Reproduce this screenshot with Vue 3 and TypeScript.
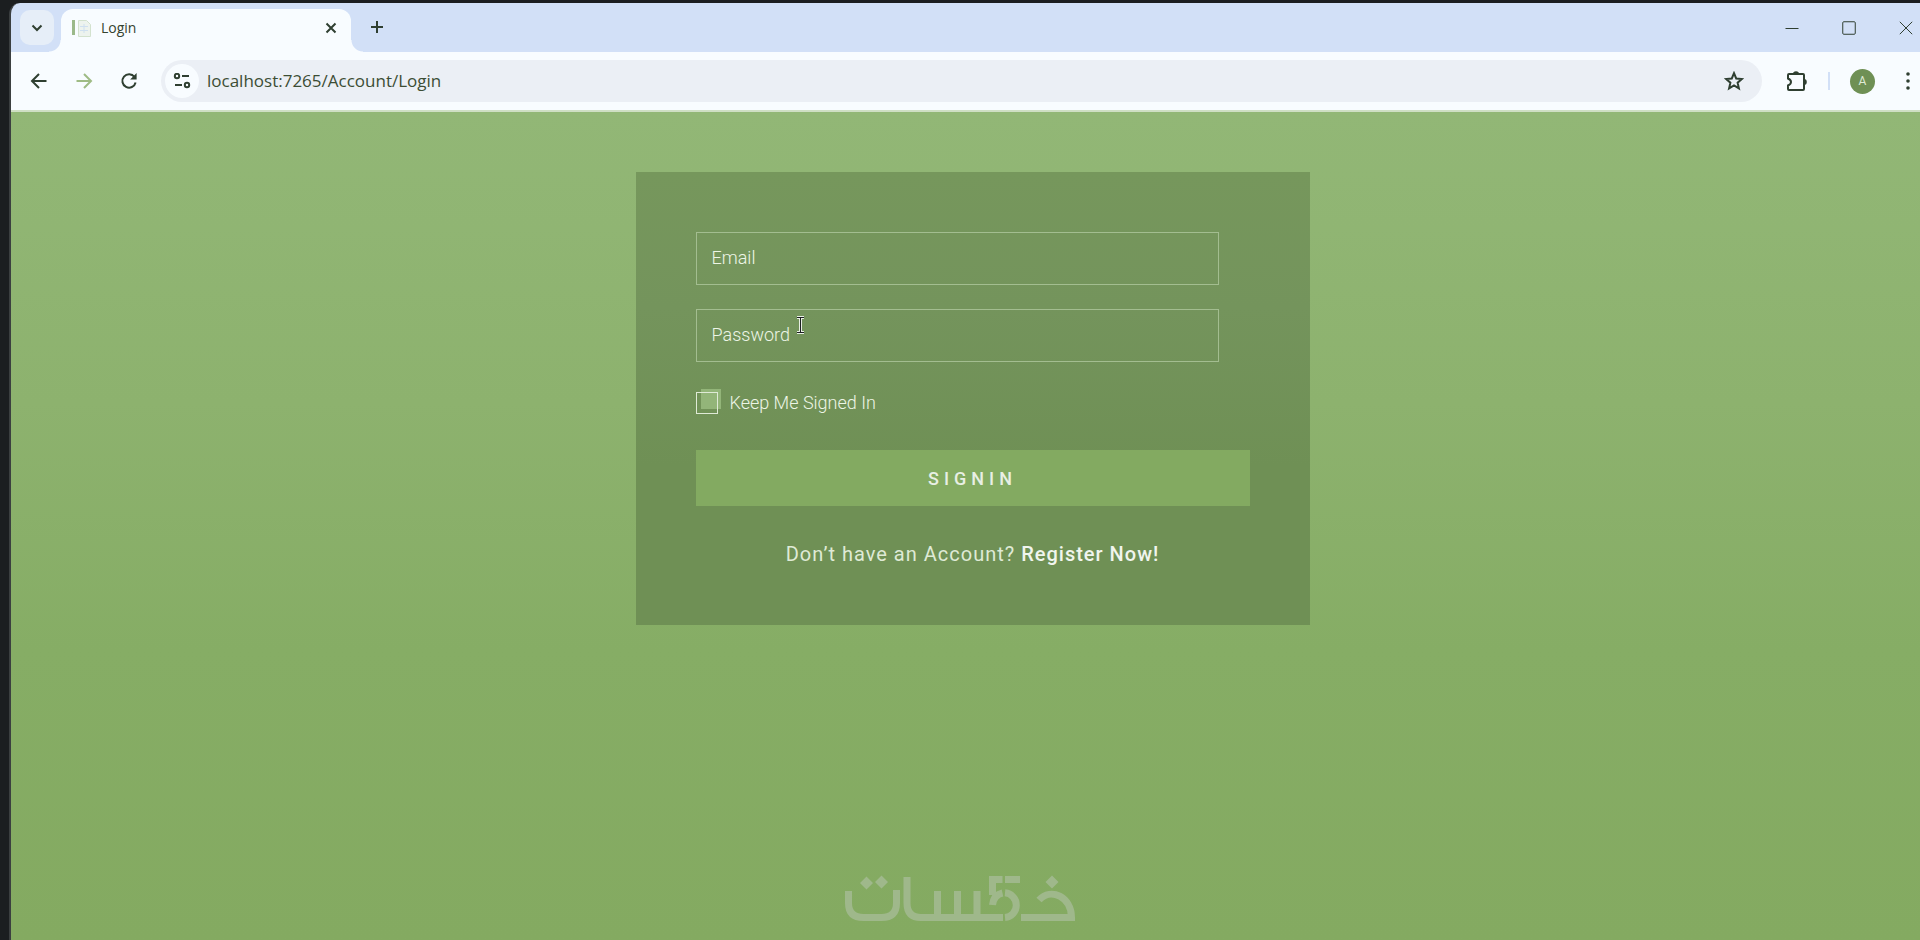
<script setup lang="ts">
import { ref } from 'vue'

const address = ref<string>('localhost:7265/Account/Login')
const email = ref<string>('')
const password = ref<string>('')
const keepSignedIn = ref<boolean>(false)
</script>

<template>
  <div class="desktop">
    <div class="window">
      <header class="tab-strip">
        <button class="tab-search" type="button" aria-label="Search tabs">
          <svg width="12" height="8" viewBox="0 0 12 8"><path d="M1.500 1.500 6 6l4.500-4.500" /></svg>
        </button>
        <div class="tab">
          <svg class="favicon" width="20" height="20" viewBox="0 0 20 20">
            <path class="bar" d="M1 2h3v15H1z" />
            <path class="sheet" d="M7.500 2.500h8l4 4v12h-12z" />
            <path class="lines" d="M9 8.500h8M9 12.500h8M13 6v9" />
          </svg>
          <span class="tab-title">Login</span>
          <button class="tab-close" type="button" aria-label="Close tab">
            <svg width="12" height="12" viewBox="0 0 12 12"><path d="m1.500 1.500 9 9m0-9-9 9" /></svg>
          </button>
        </div>
        <button class="new-tab" type="button" aria-label="New tab">
          <svg width="14" height="14" viewBox="0 0 14 14"><path d="M7 1v12M1 7h12" /></svg>
        </button>
        <div class="window-controls">
          <button type="button" aria-label="Minimize">
            <svg width="14" height="14" viewBox="0 0 14 14"><path d="M.5 7.500h13" /></svg>
          </button>
          <button type="button" aria-label="Maximize">
            <svg width="14" height="14" viewBox="0 0 14 14"><rect x=".75" y=".75" width="12.500" height="12.500" rx="1" /></svg>
          </button>
          <button type="button" aria-label="Close">
            <svg width="14" height="14" viewBox="0 0 14 14"><path d="m.8.8 12.400 12.400m0-12.400L.8 13.200" /></svg>
          </button>
        </div>
      </header>

      <nav class="toolbar">
        <button class="nav-button" type="button" aria-label="Back">
          <svg width="18" height="18" viewBox="0 0 18 18"><path d="M16.500 9H2.500M9 2 2 9l7 7" /></svg>
        </button>
        <button class="nav-button muted" type="button" aria-label="Forward">
          <svg width="18" height="18" viewBox="0 0 18 18"><path d="M1.500 9h14M9 2l7 7-7 7" /></svg>
        </button>
        <button class="nav-button" type="button" aria-label="Reload">
          <svg width="18" height="18" viewBox="0 0 18 18">
            <path d="M14.500 5A6.700 6.700 0 1 0 15.600 10.500" />
            <path class="solid" d="M16.600 1v6.500h-6.500z" />
          </svg>
        </button>
        <div class="omnibox">
          <button class="site-info" type="button" aria-label="Site information">
            <svg width="18" height="16" viewBox="0 0 18 16">
              <circle cx="4" cy="3" r="2.200" /><path d="M9 3h7M2 12h7" /><circle cx="14" cy="12" r="2.200" />
            </svg>
          </button>
          <input v-model="address" class="address" type="text" aria-label="Address" spellcheck="false" />
          <button class="bookmark" type="button" aria-label="Bookmark this page">
            <svg width="20" height="20" viewBox="0 0 20 20">
              <path d="m10 2.200 2.200 5.300 5.700.5-4.300 3.700 1.300 5.600-4.900-3-4.900 3 1.300-5.600L2.100 8l5.700-.5z" />
            </svg>
          </button>
        </div>
        <button class="extensions" type="button" aria-label="Extensions">
          <svg width="22" height="22" viewBox="0 0 22 22">
            <path d="M3 4h14a1 1 0 0 1 1 1v14a1 1 0 0 1-1 1H3a1 1 0 0 1-1-1v-3.500q3-1.300 3-3.500T2 8.500V5a1 1 0 0 1 1-1z" />
            <path class="solid" d="M7 4a3 2.800 0 0 1 6 0zM18 9a2.800 3 0 0 1 0 6z" />
          </svg>
        </button>
        <span class="divider"></span>
        <button class="avatar" type="button" aria-label="Profile">A</button>
        <button class="menu" type="button" aria-label="Menu">
          <svg width="4" height="18" viewBox="0 0 4 18"><circle cx="2" cy="2" r="1.800" /><circle cx="2" cy="9" r="1.800" /><circle cx="2" cy="16" r="1.800" /></svg>
        </button>
      </nav>

      <main class="page">
        <form class="card" @submit.prevent>
          <input v-model="email" class="field" type="email" placeholder="Email" aria-label="Email" />
          <div class="password">
            <input v-model="password" class="field" type="password" placeholder="Password" aria-label="Password" />
            <svg class="text-cursor" width="10" height="20" viewBox="0 0 10 20">
              <path class="halo" d="M1 2.500h7M4.500 2.500v15M1 17.500h7" />
              <path d="M1 2.500h7M4.500 2.500v15M1 17.500h7" />
            </svg>
          </div>
          <label class="keep">
            <input v-model="keepSignedIn" type="checkbox" />
            <span>Keep Me Signed In</span>
          </label>
          <button class="signin" type="submit">SIGNIN</button>
          <p class="register">Don’t have an Account? <a href="#">Register Now!</a></p>
        </form>
      </main>
    </div>

    <svg class="watermark" width="230" height="48" viewBox="0 0 230 48" role="img" aria-label="خمسات">
      <g class="strokes">
        <path d="M3.500 16v12q0 14.500 15 14.500h18q15 0 15-14.500V15" />
        <path d="M62 2v26q0 14.500 14 14.500h82" />
        <path d="M92.500 16v26M112.500 16v26M132 16v26" />
        <path d="M175 4.500h-15M157.500 4.500h-10V20M147.500 30q1-10 10-12M160 17.800a12.400 12.400 0 0 1 0 24.700" />
        <path d="M194 25c12-13 32.500-3 32.500 17.500H176" />
      </g>
      <path class="dots" d="m21.500 1.500 6.500 6.500-6.500 6.500L15 8zM36.500.5 43 7l-6.500 6.500L30 7zM207 .5l6.500 6.500-6.500 6.500L200.500 7z" />
    </svg>
  </div>
</template>

<style>
html,
body {
  margin: 0;
  background: #1b1e20;
}
</style>

<style scoped>
.desktop {
  position: relative;
  box-sizing: border-box;
  min-height: 100vh;
  padding: 3px 0 0 9px;
  overflow: hidden;
  display: flex;
  background: #1b1e20;
  font-family: Roboto, "Liberation Sans", sans-serif;
}
.window {
  flex: 1;
  min-width: 0;
  margin-right: -14px;
  display: flex;
  flex-direction: column;
  border-left: 2px solid #3b3f40;
  border-radius: 11px 0 0 0;
  overflow: hidden;
  background: #d2e0f7;
}
button {
  margin: 0;
  padding: 0;
  border: 0;
  background: none;
  display: grid;
  place-items: center;
  font-family: inherit;
}
svg {
  fill: none;
  stroke: #2f3f31;
  stroke-width: 2;
}
.solid {
  fill: #2f3f31;
  stroke: none;
}

.tab-strip {
  height: 49px;
  display: flex;
  align-items: flex-start;
}
.tab-search {
  width: 34px;
  height: 35px;
  margin: 7px 7px 0 9px;
  border-radius: 10px;
  background: #e6eef8;
}
.tab {
  position: relative;
  box-sizing: border-box;
  width: 290px;
  height: 43px;
  margin-top: 6px;
  padding: 0 10px 6px;
  display: flex;
  align-items: center;
  border-radius: 12px 12px 0 0;
  background: #f8fcff;
}
.tab::before,
.tab::after {
  content: "";
  position: absolute;
  bottom: 0;
  width: 12px;
  height: 12px;
}
.tab::before {
  right: 100%;
  background: radial-gradient(circle at 0 0, transparent 11px, #f8fcff 12px);
}
.tab::after {
  left: 100%;
  background: radial-gradient(circle at 100% 0, transparent 11px, #f8fcff 12px);
}
.favicon .bar {
  fill: #9bb98a;
  stroke: none;
}
.favicon .sheet {
  fill: #edf3ee;
  stroke: #d3e2ce;
  stroke-width: 1;
}
.favicon .lines {
  stroke: #cfe0f0;
  stroke-width: 1;
}
.tab-title {
  flex: 1;
  margin-left: 10px;
  color: #35432f;
  font: 14px/20px "Open Sans", "Noto Sans", sans-serif;
}
.tab-close {
  width: 20px;
  height: 20px;
}
.new-tab {
  width: 32px;
  height: 32px;
  margin: 8px 0 0 10px;
}
.window-controls {
  margin-left: auto;
  display: flex;
}
.window-controls button {
  width: 57px;
  height: 49px;
}
.window-controls svg {
  stroke-width: 1;
}

.toolbar {
  height: 58px;
  padding: 0 18px 0 10px;
  display: flex;
  align-items: center;
  background: #f8fcff;
  border-bottom: 2px solid #cfdfc4;
}
.nav-button {
  width: 35px;
  height: 35px;
  margin-right: 10px;
}
.nav-button.muted svg {
  stroke: #9fbb85;
}
.omnibox {
  flex: 1;
  height: 42px;
  margin: 0 24px 0 5px;
  padding: 0 18px 0 4px;
  display: flex;
  align-items: center;
  border-radius: 21px;
  background: #ebeff5;
}
.site-info {
  width: 34px;
  height: 34px;
  border-radius: 50%;
  background: #f8fcff;
}
.address {
  flex: 1;
  min-width: 0;
  margin: 0;
  padding: 0 0 0 8px;
  border: 0;
  outline: 0;
  background: none;
  color: #3c4d34;
  font: 17px/24px "Open Sans", "Noto Sans", sans-serif;
}
.divider {
  width: 2px;
  height: 18px;
  margin: 0 20px;
  background: #d2e0f7;
}
.avatar {
  width: 25px;
  height: 25px;
  border-radius: 50%;
  background: #6f9055;
  color: #dfead6;
  font-size: 12px;
}
.menu {
  width: 16px;
  height: 32px;
  margin-left: 25px;
}
.menu svg {
  fill: #2f3f31;
  stroke: none;
}

.page {
  flex: 1;
  padding: 60px 24px;
  display: flex;
  flex-direction: column;
  align-items: center;
  background: linear-gradient(#92b776, #8db26e 35%, #86ad65 65%, #84aa61);
}
.card {
  box-sizing: border-box;
  width: 100%;
  max-width: 674px;
  padding: 60px 60px 58px;
  display: flex;
  flex-direction: column;
  background: linear-gradient(#76975c, #74945c 30%, #6f9055 65%);
}
.field {
  box-sizing: border-box;
  width: 523px;
  max-width: 100%;
  height: 53px;
  margin: 0 0 24px;
  padding: 0 15px 2px;
  border: 1px solid #a3bd90;
  border-radius: 0;
  outline: 0;
  background: none;
  color: #edf5e6;
  font: 300 18px/24px Roboto, "Liberation Sans", sans-serif;
}
.field::placeholder {
  color: #edf5e6;
  opacity: 1;
}
.password {
  position: relative;
}
.text-cursor {
  position: absolute;
  left: 100px;
  top: 6px;
}
.text-cursor path {
  stroke: #1b1e20;
  stroke-width: 1;
}
.text-cursor .halo {
  stroke: #e8efe4;
  stroke-width: 3;
}
.keep {
  position: relative;
  height: 24px;
  margin: 5px 0 35px;
  display: flex;
  align-items: center;
  gap: 12px;
  align-self: flex-start;
  color: #edf5e6;
  font: 300 18px/24px Roboto, "Liberation Sans", sans-serif;
}
.keep::before {
  content: "";
  position: absolute;
  left: 5px;
  top: -2px;
  width: 20px;
  height: 20px;
  background: #93b579;
}
.keep input {
  position: relative;
  appearance: none;
  box-sizing: border-box;
  width: 22px;
  height: 22px;
  margin: 0;
  border: 1px solid #dfead6;
}
.signin {
  height: 56px;
  background: #83aa61;
  color: #e8efe4;
  font-size: 18px;
  font-weight: 500;
  letter-spacing: 5px;
}
.register {
  margin: 35px 0 0;
  color: #dfead6;
  font-size: 20px;
  line-height: 26px;
  letter-spacing: 1px;
  text-align: center;
}
.register a {
  color: #f0f5ee;
  font-weight: 500;
  text-decoration: none;
}
.watermark {
  position: absolute;
  right: 0;
  bottom: 17px;
  left: 0;
  margin: 0 auto;
}
.watermark .strokes {
  stroke: #9fb88b;
  stroke-width: 7;
}
.watermark .dots {
  fill: #9fb88b;
  stroke: none;
}
</style>
